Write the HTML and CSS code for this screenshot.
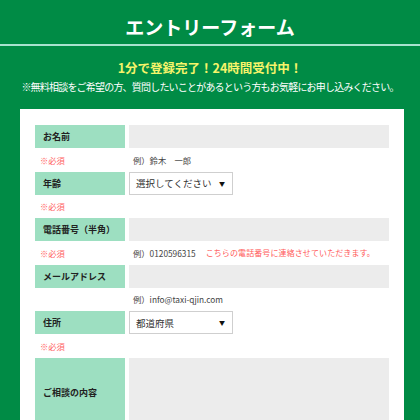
FILE: index.html
```html
<!DOCTYPE html>
<html lang="ja">
<head>
<meta charset="utf-8">
<link rel="stylesheet" href="styles.css">
</head>
<body>
<header class="header">
  <h1 class="title">エントリーフォーム</h1>
</header>
<div class="rule"></div>
<section class="intro">
  <p class="catch">1分で登録完了！24時間受付中！</p>
  <p class="lead">※無料相談をご希望の方、質問したいことがあるという方もお気軽にお申し込みください。</p>
</section>
<main class="card">
  <div class="form">
    <div class="label">お名前</div>
    <div class="field"><input class="input" type="text"></div>
    <div class="note req">※必須</div>
    <div class="note ex">例）鈴木　一郎</div>

    <div class="label">年齢</div>
    <div class="field"><div class="select"><span>選択してください</span><span class="arrow">▼</span></div></div>
    <div class="note req">※必須</div>
    <div class="note ex"></div>

    <div class="label">電話番号（半角）</div>
    <div class="field"><input class="input" type="text"></div>
    <div class="note req">※必須</div>
    <div class="note ex">例）0120596315<span class="warn">こちらの電話番号に連絡させていただきます。</span></div>

    <div class="label">メールアドレス</div>
    <div class="field"><input class="input" type="text"></div>
    <div class="note req"></div>
    <div class="note ex">例）info@taxi-qjin.com</div>

    <div class="label">住所</div>
    <div class="field"><div class="select"><span>都道府県</span><span class="arrow">▼</span></div></div>
    <div class="note req">※必須</div>
    <div class="note ex"></div>

    <div class="label label-tall">ご相談の内容</div>
    <div class="field"><textarea class="textarea"></textarea></div>
  </div>
</main>
</body>
</html>
```
FILE: styles.css
```css
* { box-sizing: border-box; }
html, body { margin: 0; padding: 0; }
body {
  background: #008b45;
  font-family: "Noto Sans CJK JP", "Noto Sans", sans-serif;
  height: 420px;
  overflow: hidden;
}
.header {
  height: 44px;
  padding-top: 10px;
}
.title {
  margin: 0;
  text-align: center;
  color: #fff;
  font-size: 19px;
  line-height: 34px;
  font-weight: bold;
}
.rule {
  height: 2px;
  background: #a9e2cf;
}
.intro {
  padding-top: 14px;
  padding-bottom: 15px;
  text-align: center;
}
.catch {
  margin: 0;
  color: #f6f46a;
  font-size: 12.5px;
  line-height: 16px;
  font-weight: bold;
}
.lead {
  margin: 4px 0 0;
  color: #fff;
  font-size: 10px;
  line-height: 14px;
  letter-spacing: -0.8px;
  white-space: nowrap;
}
.card {
  margin: 0 16px 0 20px;
  background: #fff;
  padding: 16px 15px 0;
  height: 311px;
}
.form {
  display: grid;
  grid-template-columns: 90px 1fr;
  grid-auto-rows: 23px 23.5px;
  column-gap: 4px;
}
.label {
  background: #9ddfc1;
  color: #222;
  font-size: 9px;
  font-weight: bold;
  padding-left: 8px;
  display: flex;
  align-items: center;
}
.label-tall {
  align-items: flex-start;
  padding-top: 28px;
  height: 62px;
}
.field { display: flex; }
.input {
  display: block;
  width: 100%;
  height: 23px;
  border: 0;
  background: #ececec;
  margin: 0;
}
.textarea {
  display: block;
  width: 100%;
  height: 62px;
  border: 0;
  background: #ececec;
  margin: 0;
  resize: none;
}
.select {
  width: 104px;
  height: 23px;
  border: 1px solid #cfcfcf;
  background: #fff;
  display: flex;
  align-items: center;
  justify-content: space-between;
  padding: 0 7px 0 6px;
  font-size: 9.5px;
  color: #333;
}
.arrow {
  font-size: 6px;
  color: #111;
}
.note {
  display: flex;
  align-items: center;
  font-size: 8.3px;
}
.req {
  color: #ff6464;
  padding-left: 5px;
}
.ex {
  color: #444;
  padding-left: 4px;
}
.warn {
  color: #ff5a5a;
  margin-left: 10px;
  font-size: 8px;
  letter-spacing: 0.1px;
}
```
